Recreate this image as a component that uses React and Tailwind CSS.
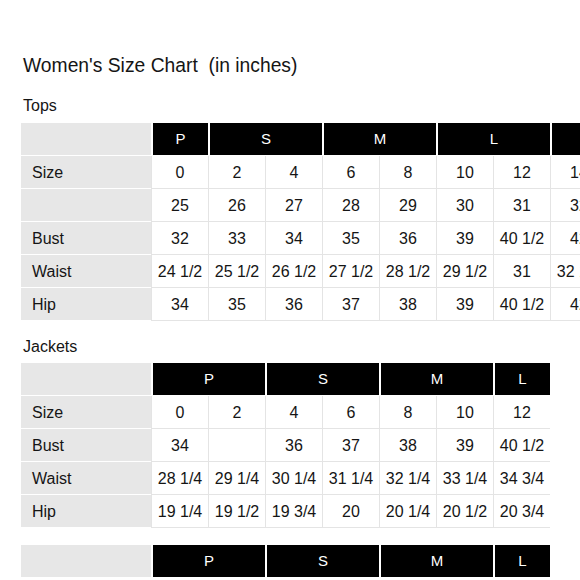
import React from "react";

const tops = {
  head: [["P", 1], ["S", 2], ["M", 2], ["L", 2], ["XL", 2]],
  rows: [
    ["Size", ["0", "2", "4", "6", "8", "10", "12", "14", "16"]],
    ["", ["25", "26", "27", "28", "29", "30", "31", "32", "33"]],
    ["Bust", ["32", "33", "34", "35", "36", "39", "40 1/2", "42", "43"]],
    ["Waist", ["24 1/2", "25 1/2", "26 1/2", "27 1/2", "28 1/2", "29 1/2", "31", "32 1/2", "34"]],
    ["Hip", ["34", "35", "36", "37", "38", "39", "40 1/2", "42", "43"]],
  ],
};

const jackets = {
  head: [["P", 2], ["S", 2], ["M", 2], ["L", 1]],
  rows: [
    ["Size", ["0", "2", "4", "6", "8", "10", "12"]],
    ["Bust", ["34", "", "36", "37", "38", "39", "40 1/2"]],
    ["Waist", ["28 1/4", "29 1/4", "30 1/4", "31 1/4", "32 1/4", "33 1/4", "34 3/4"]],
    ["Hip", ["19 1/4", "19 1/2", "19 3/4", "20", "20 1/4", "20 1/2", "20 3/4"]],
  ],
};

const pants = {
  head: [["P", 2], ["S", 2], ["M", 2], ["L", 1]],
  rows: [],
};

function SizeTable({ data }) {
  return (
    <div className="flex flex-col w-max">
      <div className="flex h-[33px]">
        <div className="w-[130px] shrink-0 bg-[#e7e7e7] border-b border-white" />
        {data.head.map(([label, span]) => (
          <div
            key={label}
            style={{ width: span * 57 }}
            className="shrink-0 bg-black text-white text-[15px] flex items-center justify-center border-l-2 border-b border-white box-border"
          >
            {label}
          </div>
        ))}
      </div>
      {data.rows.map(([label, vals], i) => (
        <div key={i} className="flex h-[33px]">
          <div className="w-[130px] shrink-0 bg-[#e7e7e7] border-b border-white flex items-center pl-[11px] pt-px text-[16px] text-[#151515]">
            {label}
          </div>
          {vals.map((v, j) => (
            <div
              key={j}
              className="w-[57px] shrink-0 bg-white border-l border-b border-[#e4e4e4] flex items-center justify-center pt-px text-[16px] text-[#151515] whitespace-nowrap"
            >
              {v}
            </div>
          ))}
        </div>
      ))}
    </div>
  );
}

export default function App() {
  return (
    <div
      className="w-[580px] h-[580px] overflow-hidden bg-white pl-[21px] pt-[54px]"
      style={{ fontFamily: '"Liberation Sans", Arial, sans-serif' }}
    >
      <h1 className="text-[19.3px] leading-[24px] text-[#151515] whitespace-pre pl-[2px]">
        {"Women's Size Chart  (in inches)"}
      </h1>
      <h2 className="mt-[17px] text-[16px] leading-[21px] font-medium text-[#151515] pl-[2px]">Tops</h2>
      <div className="mt-[7px]">
        <SizeTable data={tops} />
      </div>
      <h2 className="mt-[15px] text-[16px] leading-[21px] font-medium text-[#151515] pl-[2px]">Jackets</h2>
      <div className="mt-[6px]">
        <SizeTable data={jackets} />
      </div>
      <div className="mt-[17px]">
        <SizeTable data={pants} />
      </div>
    </div>
  );
}
